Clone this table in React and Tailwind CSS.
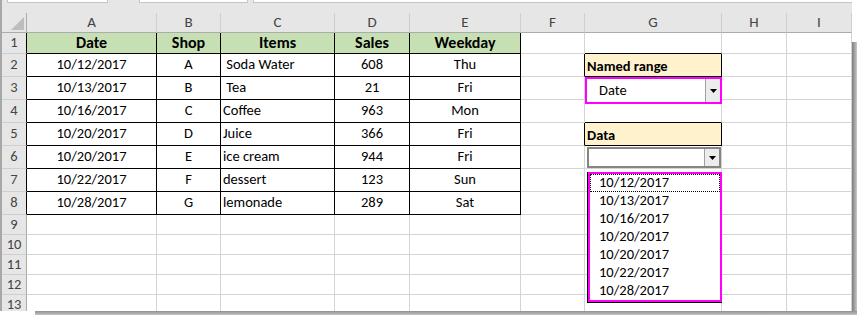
import React from 'react';

const COLS = [
  { key: 'A', w: 'w-[130px]' },
  { key: 'B', w: 'w-[64px]' },
  { key: 'C', w: 'w-[114px]' },
  { key: 'D', w: 'w-[75px]' },
  { key: 'E', w: 'w-[111px]' },
  { key: 'F', w: 'w-[64px]' },
  { key: 'G', w: 'w-[137px]' },
  { key: 'H', w: 'w-[65px]' },
  { key: 'I', w: 'w-[65px]' },
];

const ROW_HEIGHTS = [
  'h-[21px]', 'h-[23px]', 'h-[23px]', 'h-[23px]', 'h-[23px]', 'h-[23px]', 'h-[23px]',
  'h-[23px]', 'h-[20px]', 'h-[20px]', 'h-[20px]', 'h-[20px]', 'h-[20px]',
];

const TABLE = [
  ['Date', 'Shop', 'Items', 'Sales', 'Weekday'],
  ['10/12/2017', 'A', ' Soda Water', '608', 'Thu'],
  ['10/13/2017', 'B', ' Tea', '21', 'Fri'],
  ['10/16/2017', 'C', 'Coffee', '963', 'Mon'],
  ['10/20/2017', 'D', 'Juice', '366', 'Fri'],
  ['10/20/2017', 'E', 'ice cream', '944', 'Fri'],
  ['10/22/2017', 'F', 'dessert', '123', 'Sun'],
  ['10/28/2017', 'G', 'lemonade', '289', 'Sat'],
];

const DATES = ['10/12/2017', '10/13/2017', '10/16/2017', '10/20/2017', '10/20/2017', '10/22/2017', '10/28/2017'];

function Arrow() {
  return (
    <svg width="7" height="4" viewBox="0 0 7 4">
      <path d="M0 0h7L3.5 4z" fill="#000" />
    </svg>
  );
}

function DropButton() {
  return (
    <div className="flex h-full w-[15px] items-center justify-center border-l border-[#a0a0a0] bg-[#ececec]">
      <Arrow />
    </div>
  );
}

function borders(r, c) {
  const inTable = r <= 8 && c <= 4;
  const right = inTable || ((c === 5 || c === 6) && (r === 2 || r === 5));
  const bottom = inTable || (c === 6 && (r === 1 || r === 2 || r === 4 || r === 5));
  return `${right ? 'border-r-black' : 'border-r-[#d4d4d4]'} ${bottom ? 'border-b-black' : 'border-b-[#d4d4d4]'}`;
}

function Cell({ r, c }) {
  const col = COLS[c];
  let content = null;
  let extra = '';

  if (r <= 8 && c <= 4) {
    const text = TABLE[r - 1][c];
    if (r === 1) extra = 'bg-[#c6e0b4] font-bold text-[16px] justify-center';
    else if (c === 2) extra = 'justify-start pl-[2px]';
    else extra = 'justify-center';
    content = <span className="whitespace-pre">{text}</span>;
  }

  if (c === 6 && r === 2) {
    extra = 'bg-[#fff2cc] font-bold pl-[2px] pt-[3px]';
    content = <span>Named range</span>;
  }
  if (c === 6 && r === 5) {
    extra = 'bg-[#fff2cc] font-bold pl-[2px] pt-[3px]';
    content = <span>Data</span>;
  }
  if (c === 6 && r === 3) {
    content = (
      <div className="absolute left-0 top-0 z-10 flex h-[27px] w-[137px] items-center border-2 border-[#ff00ff] bg-white">
        <span className="flex-1 pl-[12px] pt-[1px]">Date</span>
        <DropButton />
      </div>
    );
  }
  if (c === 6 && r === 6) {
    content = (
      <div className="absolute left-[2px] top-[1px] z-10 flex h-[21px] w-[134px] items-center border-2 border-[#858585] bg-white">
        <span className="flex-1" />
        <DropButton />
      </div>
    );
  }
  if (c === 6 && r === 7) {
    content = (
      <div className="absolute left-[2px] top-[3px] z-10 w-[135px] border-b border-l border-black">
        <div className="border-2 border-[#ff00ff] bg-white">
          {DATES.map((d, i) => (
            <div
              key={i}
              className={`flex h-[18px] items-center pl-[8px] ${i === 0 ? 'border border-dotted border-black' : 'border border-transparent'}`}
            >
              {d}
            </div>
          ))}
        </div>
      </div>
    );
  }

  return (
    <div className={`relative flex ${col.w} h-full shrink-0 items-center border-r border-b ${borders(r, c)} ${extra}`}>
      {content}
    </div>
  );
}

export default function App() {
  return (
    <div className="relative flex h-[315px] w-[857px] flex-col overflow-hidden bg-white font-[Calibri,Carlito,'Liberation_Sans',sans-serif] text-[14.5px] text-black">
      <div className="flex h-[311px]">
        <div className="flex w-[852px] flex-col overflow-hidden border-l-2 border-l-[#a8a8a8]">
          {/* formula bar remnants */}
          <div className="flex h-[13px] shrink-0 bg-[#e6e6e6]">
            <div className="ml-[5px] h-[3px] w-[101px] border-x border-b border-[#c6c6c6] bg-white" />
            <div className="ml-[31px] h-[3px] w-[109px] border-x border-b border-[#c6c6c6] bg-white" />
            <div className="ml-[5px] h-[3px] flex-1 border-l border-b border-[#c6c6c6] bg-white" />
          </div>

          {/* column headers */}
          <div className="flex h-[20px] shrink-0 bg-[#e6e6e6] text-[15px] text-[#444]">
            <div className="relative h-full w-[25px] shrink-0 border-r border-b border-[#ababab]">
              <svg className="absolute right-[2px] bottom-[2px]" width="13" height="13" viewBox="0 0 13 13">
                <path d="M13 0v13H0z" fill="#bdbdbd" />
              </svg>
            </div>
            {COLS.map((col) => (
              <div
                key={col.key}
                className={`flex ${col.w} h-full shrink-0 items-center justify-center border-r border-b border-r-[#cfcfcf] border-b-[#ababab]`}
              >
                {col.key}
              </div>
            ))}
          </div>

          {/* rows */}
          {ROW_HEIGHTS.map((h, i) => {
            const r = i + 1;
            return (
              <div key={r} className={`flex ${h} shrink-0`}>
                <div
                  className={`flex h-full w-[25px] shrink-0 items-center justify-center border-r border-b bg-[#e6e6e6] text-[#444] ${
                    r <= 8 ? 'border-r-black' : 'border-r-[#ababab]'
                  } border-b-[#cfcfcf]`}
                >
                  {r}
                </div>
                {COLS.map((col, c) => (
                  <Cell key={col.key} r={r} c={c} />
                ))}
              </div>
            );
          })}
        </div>

        {/* right shadow */}
        <div className="flex w-[5px] flex-col">
          <div className="h-[42px] bg-white" />
          <div className="flex-1 bg-gradient-to-r from-[#7d7d7d] to-[#c9c9c9]" />
        </div>
      </div>

      {/* bottom shadow */}
      <div className="flex h-[4px]">
        <div className="w-[35px] bg-white" />
        <div className="flex-1 bg-gradient-to-b from-[#8f8f8f] to-[#c4c4c4]" />
      </div>
    </div>
  );
}
